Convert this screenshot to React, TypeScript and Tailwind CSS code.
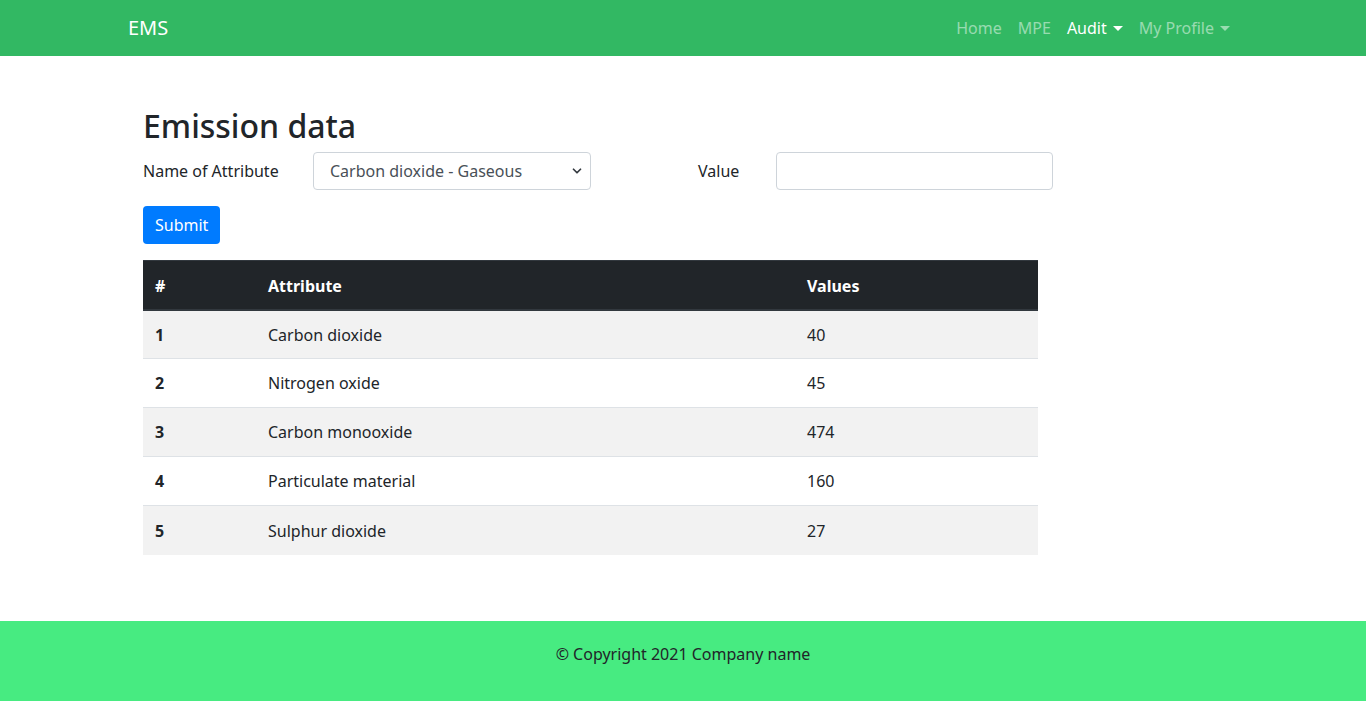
import { ChevronDown } from "lucide-react";

const rows = [
  { id: 1, attr: "Carbon dioxide", value: "40" },
  { id: 2, attr: "Nitrogen oxide", value: "45" },
  { id: 3, attr: "Carbon monooxide", value: "474" },
  { id: 4, attr: "Particulate material", value: "160" },
  { id: 5, attr: "Sulphur dioxide", value: "27" },
];

function Caret() {
  return <span className="ml-[6px] inline-block h-0 w-0 border-x-[5px] border-t-[5px] border-x-transparent border-t-current align-[3px]" />;
}

export default function App() {
  return (
    <div className="flex min-h-[701px] flex-col bg-white text-[16px] text-[#212529] [font-family:'Noto_Sans',sans-serif]">
      <nav className="h-[56px] bg-[#32b863]">
        <div className="mx-auto flex h-full w-[1140px] items-center justify-between px-[15px]">
          <span className="text-[20px] text-white">EMS</span>
          <ul className="flex items-center">
            <li className="px-[8px] text-[rgba(255,255,255,0.5)]">Home</li>
            <li className="px-[8px] text-[rgba(255,255,255,0.5)]">MPE</li>
            <li className="px-[8px] text-white">
              Audit
              <Caret />
            </li>
            <li className="px-[8px] text-[rgba(255,255,255,0.5)]">
              My Profile
              <Caret />
            </li>
          </ul>
        </div>
      </nav>

      <main className="mx-auto w-[1140px] px-[30px] pt-[51px] pb-[66px]">
        <h2 className="mb-[7px] text-[32px] leading-[1.2] font-medium">Emission data</h2>

        <div className="flex items-center">
          <label className="w-[170px]">Name of Attribute</label>
          <div className="relative flex h-[38px] w-[278px] items-center rounded-[4px] border border-[#ced4da] pl-[16px] text-[#495057]">
            Carbon dioxide - Gaseous
            <ChevronDown className="absolute right-[6px] h-[14px] w-[14px] text-[#343a40]" strokeWidth={3} />
          </div>
          <label className="ml-[107px] w-[78px]">Value</label>
          <div className="h-[38px] w-[277px] rounded-[4px] border border-[#ced4da]" />
        </div>

        <button className="mt-[16px] h-[38px] rounded-[4px] bg-[#007bff] px-[12px] text-white">Submit</button>

        <table className="mt-[16px] w-[895px] border-collapse">
          <thead>
            <tr className="bg-[#212529] text-white">
              <th className="h-[49px] w-[113px] border-t border-b-2 border-[#32383e] px-[12px] pt-[1px] text-left font-bold">#</th>
              <th className="w-[539px] border-t border-b-2 border-[#32383e] px-[12px] pt-[1px] text-left font-bold">Attribute</th>
              <th className="border-t border-b-2 border-[#32383e] px-[12px] pt-[1px] text-left font-bold">Values</th>
            </tr>
          </thead>
          <tbody>
            {rows.map((r, i) => (
              <tr key={r.id} className={i % 2 === 0 ? "bg-[#f2f2f2]" : "bg-white"}>
                <td className={`h-[49px] px-[12px] font-bold ${i > 0 ? "border-t border-[#dee2e6]" : ""}`}>{r.id}</td>
                <td className={`px-[12px] ${i > 0 ? "border-t border-[#dee2e6]" : ""}`}>{r.attr}</td>
                <td className={`px-[12px] ${i > 0 ? "border-t border-[#dee2e6]" : ""}`}>{r.value}</td>
              </tr>
            ))}
          </tbody>
        </table>
      </main>

      <footer className="h-[80px] bg-[#47eb81] pt-[21px] text-center">
        <p>© Copyright 2021 Company name</p>
      </footer>
    </div>
  );
}
